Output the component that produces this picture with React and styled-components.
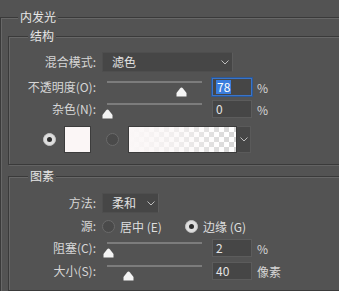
import React from 'react'
import styled, { createGlobalStyle } from 'styled-components'

const GlobalStyle = createGlobalStyle`
  html, body {
    margin: 0;
    padding: 0;
    background: #535353;
    overflow: hidden;
  }
  body {
    width: 339px;
    height: 291px;
    font-family: "Noto Sans CJK SC", "Noto Sans", sans-serif;
    font-size: 12px;
    color: #d4d4d4;
  }
`

const Page = styled.div`
  width: 339px;
  height: 291px;
  overflow: hidden;
`

const Panel = styled.fieldset`
  box-sizing: border-box;
  width: ${p => p.$width}px;
  margin: ${p => p.$top}px 0 0 0;
  padding: ${p => p.$pad};
  border: 1px solid #3a3a3a;
  box-shadow: inset 1px 1px 0 #676767, 1px 1px 0 #636363;
  min-width: 0;
`

const Legend = styled.legend`
  margin-left: ${p => p.$offset}px;
  padding: 0 2px;
  line-height: 14px;
  font-size: 12px;
  color: #e6e6e6;
  background: #535353;
`

const Row = styled.div`
  display: flex;
  align-items: center;
  height: ${p => p.$h}px;
  margin-top: ${p => p.$mt}px;
  padding-left: ${p => p.$indent || 0}px;
`

const Label = styled.div`
  width: 87px;
  flex: none;
  text-align: right;
  margin-right: 6px;
  white-space: nowrap;
  line-height: 14px;
  color: #d6d6d6;
`

const Select = styled.div`
  box-sizing: border-box;
  width: ${p => p.$w}px;
  height: 20px;
  display: flex;
  align-items: center;
  justify-content: space-between;
  padding: 0 3px 0 9px;
  background: #464646;
  border: 1px solid #4e4e4e;
  border-right-color: #5c5c5c;
  color: #e2e2e2;
  line-height: 14px;
`

const Chevron = () => (
  <svg width="8" height="5" viewBox="0 0 8 5">
    <path d="M0.5 0.5 L4 4 L7.5 0.5" fill="none" stroke="#bdbdbd" strokeWidth="1" />
  </svg>
)

const Slider = styled.div`
  position: relative;
  width: 102px;
  height: 18px;
  align-self: flex-start;
  flex: none;
`

const Track = styled.div`
  position: absolute;
  left: 5px;
  right: 2px;
  top: 3px;
  height: 2px;
  background: #7c7c7c;
`

const ThumbWrap = styled.div`
  position: absolute;
  top: 5px;
  width: 11px;
  height: 10px;
`

const Thumb = ({ pct }) => (
  <ThumbWrap style={{ left: (pct / 100) * 95 - 0.5 }}>
    <svg width="11" height="10" viewBox="0 0 11 10">
      <path d="M5.5 0.5 Q6.2 0.5 7 1.5 L10.5 6 L10.5 9.5 L0.5 9.5 L0.5 6 L4 1.5 Q4.8 0.5 5.5 0.5 Z" fill="#f4f4f4" />
    </svg>
  </ThumbWrap>
)

const Input = styled.div`
  box-sizing: border-box;
  width: 40px;
  height: 18px;
  margin-left: 8px;
  padding-left: 3px;
  display: flex;
  align-items: center;
  background: #464646;
  border: 1px solid ${p => (p.$focus ? '#3a74c9' : '#5c5c5c')};
  outline: ${p => (p.$focus ? '1px solid #2b5896' : 'none')};
  color: #e4e4e4;
  line-height: 14px;
  flex: none;
`

const Selected = styled.span`
  background: #3b7ddd;
  color: #ffffff;
  padding: 0 1px;
`

const Unit = styled.span`
  margin-left: 5px;
  color: #d6d6d6;
`

const RadioDot = styled.span`
  box-sizing: border-box;
  width: 13px;
  height: 13px;
  border-radius: 50%;
  flex: none;
  display: flex;
  align-items: center;
  justify-content: center;
  background: ${p => (p.$on ? '#dedede' : '#4a4a4a')};
  border: 1px solid ${p => (p.$on ? '#c4c4c4' : '#6a6a6a')};
  &::after {
    content: '';
    width: 5px;
    height: 5px;
    border-radius: 50%;
    background: ${p => (p.$on ? '#2d2d2d' : 'transparent')};
  }
`

const Option = styled.div`
  display: flex;
  align-items: center;
  width: ${p => p.$w || 'auto'};
  flex: none;
`

const OptionText = styled.span`
  margin-left: 5px;
  color: #dedede;
  white-space: nowrap;
`

const Swatch = styled.div`
  box-sizing: border-box;
  width: 27px;
  height: 27px;
  margin-left: 8px;
  background: #fbf6f6;
  border: 1px solid #3c3c3c;
  flex: none;
`

const Gradient = styled.div`
  box-sizing: border-box;
  width: 109px;
  height: 27px;
  margin-left: 9px;
  border: 1px solid #3c3c3c;
  background:
    linear-gradient(to right, #fbf7f7 0%, rgba(251, 247, 247, 0.7) 45%, rgba(255, 255, 255, 0) 100%),
    repeating-conic-gradient(#d6d6d6 0 25%, #ffffff 0 50%) 0 0 / 10px 10px;
  flex: none;
`

const GradientMenu = styled.div`
  box-sizing: border-box;
  width: 14px;
  height: 27px;
  display: flex;
  align-items: center;
  justify-content: center;
  background: #474747;
  border: 1px solid #5a5a5a;
  border-left: none;
  flex: none;
`

const SliderRow = ({ label, pct, value, unit, focus, mt }) => (
  <Row $h={18} $mt={mt}>
    <Label>{label}</Label>
    <Slider>
      <Track />
      <Thumb pct={pct} />
    </Slider>
    <Input $focus={focus}>{focus ? <Selected>{value}</Selected> : value}</Input>
    <Unit>{unit}</Unit>
  </Row>
)

export default function App() {
  return (
    <Page>
      <GlobalStyle />
      <Panel $width={430} $top={10} $pad="5px 0 0 7px">
        <Legend $offset={10}>内发光</Legend>

        <Panel $width={420} $top={0} $pad="0 0 11px 0">
          <Legend $offset={19}>结构</Legend>
          <Row $h={20} $mt={9}>
            <Label>混合模式:</Label>
            <Select $w={131}>
              <span>滤色</span>
              <Chevron />
            </Select>
          </Row>
          <SliderRow label="不透明度(O):" pct={78} value="78" unit="%" focus mt={6} />
          <SliderRow label="杂色(N):" pct={0} value="0" unit="%" mt={4} />
          <Row $h={27} $mt={8} $indent={34}>
            <RadioDot $on />
            <Swatch />
            <Option style={{ marginLeft: 15 }}>
              <RadioDot />
            </Option>
            <Gradient />
            <GradientMenu>
              <Chevron />
            </GradientMenu>
          </Row>
        </Panel>

        <Panel $width={420} $top={4} $pad="0 0 10px 0">
          <Legend $offset={19}>图素</Legend>
          <Row $h={20} $mt={10}>
            <Label>方法:</Label>
            <Select $w={57}>
              <span>柔和</span>
              <Chevron />
            </Select>
          </Row>
          <Row $h={18} $mt={4}>
            <Label>源:</Label>
            <Option $w="83px">
              <RadioDot />
              <OptionText>居中 (E)</OptionText>
            </Option>
            <Option>
              <RadioDot $on />
              <OptionText>边缘 (G)</OptionText>
            </Option>
          </Row>
          <SliderRow label="阻塞(C):" pct={2} value="2" unit="%" mt={4} />
          <SliderRow label="大小(S):" pct={22.6} value="40" unit="像素" mt={5} />
        </Panel>
      </Panel>
    </Page>
  )
}
